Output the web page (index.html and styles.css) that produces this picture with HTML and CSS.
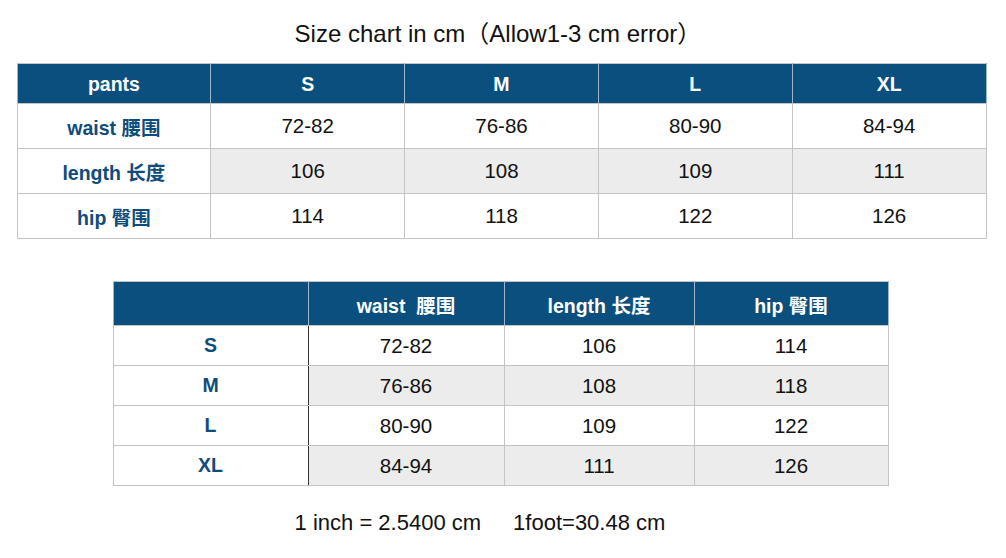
FILE: index.html
```html
<!DOCTYPE html>
<html>
<head>
<meta charset="utf-8">
<link rel="stylesheet" href="styles.css">
</head>
<body>
<div class="page">
  <h1 class="title">Size chart in cm（Allow1-3 cm error）</h1>
  <table class="chart chart-wide">
    <thead>
      <tr><th>pants</th><th>S</th><th>M</th><th>L</th><th>XL</th></tr>
    </thead>
    <tbody>
      <tr><td class="label">waist 腰围</td><td>72-82</td><td>76-86</td><td>80-90</td><td>84-94</td></tr>
      <tr class="alt"><td class="label">length 长度</td><td>106</td><td>108</td><td>109</td><td>111</td></tr>
      <tr><td class="label">hip 臀围</td><td>114</td><td>118</td><td>122</td><td>126</td></tr>
    </tbody>
  </table>
  <table class="chart chart-narrow">
    <colgroup>
      <col class="c1"><col class="c2"><col class="c3"><col class="c4">
    </colgroup>
    <thead>
      <tr><th></th><th>waist&nbsp; 腰围</th><th>length 长度</th><th>hip 臀围</th></tr>
    </thead>
    <tbody>
      <tr><td class="label dark">S</td><td>72-82</td><td>106</td><td>114</td></tr>
      <tr class="alt"><td class="label dark">M</td><td>76-86</td><td>108</td><td>118</td></tr>
      <tr><td class="label dark">L</td><td>80-90</td><td>109</td><td>122</td></tr>
      <tr class="alt"><td class="label dark">XL</td><td>84-94</td><td>111</td><td>126</td></tr>
    </tbody>
  </table>
  <p class="note">1 inch = 2.5400 cm<span class="gap"></span>1foot=30.48 cm</p>
</div>
</body>
</html>
```

FILE: styles.css
```css
html, body {
  margin: 0;
  padding: 0;
  background: #ffffff;
}
body {
  font-family: "Liberation Sans", Arial, "Noto Sans CJK SC", sans-serif;
  color: #111111;
}
.page {
  width: 1006px;
  display: flex;
  flex-direction: column;
  align-items: center;
}
.title {
  margin: 21px 0 0 0;
  padding-right: 10px;
  font-size: 24px;
  font-weight: normal;
  line-height: 26px;
  height: 26px;
}
.chart {
  border-collapse: collapse;
  table-layout: fixed;
  font-size: 20.5px;
}
.chart th {
  background: #0b4f7e;
  color: #ffffff;
  font-weight: bold;
  font-size: 19.5px;
  border: 1px solid #c4c4c4;
  border-left-color: #9fb6c8;
  border-right-color: #9fb6c8;
  padding: 2px 0 0 0;
  text-align: center;
}
.chart td {
  border: 1px solid #c4c4c4;
  padding: 0;
  text-align: center;
  background: #ffffff;
}
.chart tr.alt td {
  background: #ececec;
}
.chart tr.alt td.label,
.chart td.label {
  background: #ffffff;
  color: #0e4c7b;
  font-weight: bold;
  font-size: 19.5px;
}
.chart-wide {
  margin-top: 16px;
  margin-left: -3px;
  width: 970px;
}
.chart-wide th {
  height: 37px;
}
.chart-wide td {
  height: 44px;
}
.chart-narrow {
  margin-top: 42px;
  margin-left: -5px;
  width: 776px;
}
.chart-narrow .c1 { width: 195px; }
.chart-narrow .c2 { width: 196px; }
.chart-narrow .c3 { width: 190px; }
.chart-narrow .c4 { width: 194px; }
.chart-narrow th {
  height: 41px;
}
.chart-narrow td {
  height: 39px;
}
.chart-narrow td.dark {
  border-right: 1px solid #333333;
}
.note {
  margin: 24px 0 0 0;
  padding-right: 46px;
  font-size: 22px;
  line-height: 26px;
}
.gap {
  display: inline-block;
  width: 32px;
}
```
